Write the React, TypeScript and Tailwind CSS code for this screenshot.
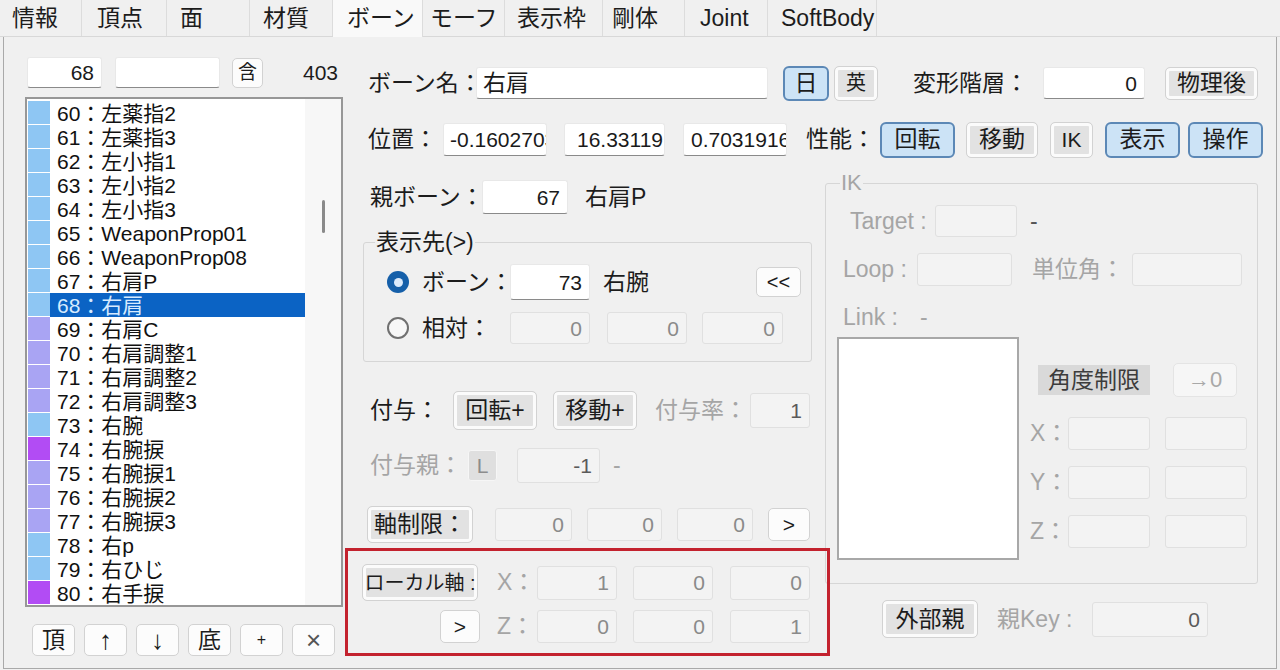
import React from "react";

const font = "font-['Liberation_Sans','Noto_Sans_CJK_JP',sans-serif]";

function Lbl({ className = "", children, off = false }: { className?: string; children: React.ReactNode; off?: boolean }) {
  return (
    <span className={`shrink-0 whitespace-nowrap text-[23px] leading-none ${off ? "text-[#a5a5a5]" : "text-[#1c1c1c]"} ${className}`}>
      {children}
    </span>
  );
}

function Field({
  className = "",
  value = "",
  off = false,
  ink = false,
  a = "justify-end pr-[7px]",
  size = "text-[21px]",
}: {
  className?: string;
  value?: string;
  off?: boolean;
  ink?: boolean;
  a?: string;
  size?: string;
}) {
  const look = off
    ? `border border-[#e0e0e0] bg-[#f3f3f3] ${ink ? "text-[#5a5a5a]" : "text-[#8a8a8a]"}`
    : "border border-[#e8e8e8] border-b-[#8a8a8a] bg-white text-[#1a1a1a]";
  return (
    <div className={`flex shrink-0 items-center overflow-hidden whitespace-nowrap rounded-[3px] leading-none ${look} ${a} ${size} ${className}`}>
      {value}
    </div>
  );
}

type Kind = "plain" | "gray" | "on" | "dim" | "faint" | "lbtn";
const kinds: Record<Kind, string> = {
  plain: "border border-[#d2d2d2] bg-[#fcfcfc] text-[#1c1c1c] rounded-[5px]",
  gray: "border border-[#d2d2d2] bg-[#e2e2e2] text-[#1c1c1c] rounded-[5px] shadow-[inset_0_0_0_3px_#fbfbfb]",
  on: "border-2 border-[#5c88b6] bg-[#cce3f6] text-[#1c1c1c] rounded-[6px]",
  dim: "bg-[#d9d9d9] text-[#3c3c3c]",
  faint: "border border-[#e4e4e4] bg-[#f6f6f6] text-[#a8a8a8] rounded-[5px]",
  lbtn: "border border-[#f6f6f6] bg-[#dfdfdf] text-[#8c8c8c] rounded-[3px]",
};

function Btn({
  kind = "plain",
  className = "",
  size = "text-[23px]",
  children,
}: {
  kind?: Kind;
  className?: string;
  size?: string;
  children: React.ReactNode;
}) {
  return (
    <div className={`flex shrink-0 items-center justify-center whitespace-nowrap leading-none ${kinds[kind]} ${size} ${className}`}>
      {children}
    </div>
  );
}

function Radio({ on = false, className = "" }: { on?: boolean; className?: string }) {
  return on ? (
    <div className={`flex h-[22px] w-[22px] shrink-0 items-center justify-center rounded-full bg-[#155fa9] ${className}`}>
      <div className="h-[9px] w-[9px] rounded-full bg-[#dbeafb]" />
    </div>
  ) : (
    <div className={`h-[22px] w-[22px] shrink-0 rounded-full border-2 border-[#707070] bg-[#f7f7f7] ${className}`} />
  );
}

const tabs = [
  { t: "情報", c: "w-[82px] pl-[12px]" },
  { t: "頂点", c: "w-[85px] pl-[15px]" },
  { t: "面", c: "w-[83px] pl-[13px]" },
  { t: "材質", c: "w-[83px] pl-[13px]" },
  { t: "ボーン", c: "w-[90px] pl-[14px]", on: true },
  { t: "モーフ", c: "w-[82px] pl-[7px]" },
  { t: "表示枠", c: "w-[98px] pl-[12px]" },
  { t: "剛体", c: "w-[82px] pl-[9px]" },
  { t: "Joint", c: "w-[83px] pl-[15px]" },
  { t: "SoftBody", c: "w-[109px] pl-[13px]" },
];

const BLUE = "bg-[#8ec6f3]";
const LAV = "bg-[#a9a4f3]";
const PUR = "bg-[#b24cf4]";
const bones: [number, string, string][] = [
  [60, "左薬指2", BLUE],
  [61, "左薬指3", BLUE],
  [62, "左小指1", BLUE],
  [63, "左小指2", BLUE],
  [64, "左小指3", BLUE],
  [65, "WeaponProp01", BLUE],
  [66, "WeaponProp08", BLUE],
  [67, "右肩P", BLUE],
  [68, "右肩", BLUE],
  [69, "右肩C", LAV],
  [70, "右肩調整1", LAV],
  [71, "右肩調整2", LAV],
  [72, "右肩調整3", LAV],
  [73, "右腕", BLUE],
  [74, "右腕捩", PUR],
  [75, "右腕捩1", LAV],
  [76, "右腕捩2", LAV],
  [77, "右腕捩3", LAV],
  [78, "右p", BLUE],
  [79, "右ひじ", BLUE],
  [80, "右手捩", PUR],
];

function BoneList() {
  return (
    <div className="flex w-[339px] shrink-0 flex-col pl-[21px]">
      <div className="mt-[20px] flex h-[31px] items-center">
        <Field className="ml-[2px] h-[31px] w-[75px]" value="68" />
        <Field className="ml-[13px] h-[31px] w-[105px]" />
        <Btn className="ml-[12px] h-[30px] w-[31px]" size="text-[19px]">含</Btn>
        <span className="flex-1 pr-[5px] text-right text-[21px] leading-none text-[#1c1c1c]">403</span>
      </div>
      <div className="mt-[9px] flex h-[510px] w-[318px] border-2 border-[#979797] bg-white">
        <div className="flex w-[278px] flex-col pt-[2px]">
          {bones.map(([n, name, c]) => (
            <div key={n} className="flex h-[24px] shrink-0">
              <div className={`ml-[1px] h-[23px] w-[22px] ${c}`} />
              <div
                className={`flex w-[255px] items-center whitespace-nowrap pl-[7px] text-[21px] leading-none ${
                  n === 68 ? "bg-[#0b63c4] text-[#d6ebff]" : "text-[#111111]"
                }`}
              >
                {n}：{name}
              </div>
            </div>
          ))}
        </div>
        <div className="flex w-[36px] justify-center bg-[#f7f7f7] pt-[101px]">
          <div className="h-[33px] w-[3px] rounded-full bg-[#8a8a8a]" />
        </div>
      </div>
      <div className="ml-[7px] mt-[17px] flex gap-[9px]">
        <Btn className="h-[32px] w-[43px]">頂</Btn>
        <Btn className="h-[32px] w-[43px]" size="text-[26px]">↑</Btn>
        <Btn className="h-[32px] w-[43px]" size="text-[26px]">↓</Btn>
        <Btn className="h-[32px] w-[43px]">底</Btn>
        <Btn className="h-[32px] w-[43px]" size="text-[16px]">+</Btn>
        <Btn className="h-[32px] w-[43px] text-[#555555]" size="text-[26px]">×</Btn>
      </div>
    </div>
  );
}

function BoneDetail() {
  return (
    <div className="flex w-[482px] shrink-0 flex-col">
      <div className="mt-[22px] flex h-[34px] items-center pl-[27px]">
        <Lbl className="w-[112px]">親ボーン：</Lbl>
        <Field className="h-[34px] w-[86px]" value="67" />
        <Lbl className="ml-[17px]">右肩P</Lbl>
      </div>

      <fieldset className="ml-[20px] mt-[17px] w-[449px] rounded-[3px] border border-[#d6d6d6] pb-[17px]">
        <legend className="ml-[11px] px-[1px] text-[23px] leading-[22px] text-[#1c1c1c]">表示先(&gt;)</legend>
        <div className="mt-[11px] flex h-[36px] items-center">
          <Radio on className="ml-[23px]" />
          <Lbl className="ml-[13px] w-[88px]">ボーン：</Lbl>
          <Field className="h-[36px] w-[80px]" value="73" />
          <Lbl className="ml-[13px]">右腕</Lbl>
          <Btn className="ml-auto mr-[10px] h-[30px] w-[45px]" size="text-[20px]">&lt;&lt;</Btn>
        </div>
        <div className="mt-[12px] flex h-[32px] items-center">
          <Radio className="ml-[23px]" />
          <Lbl className="ml-[13px] w-[88px]">相対：</Lbl>
          <Field off className="h-[32px] w-[80px]" value="0" />
          <Field off className="ml-[17px] h-[32px] w-[80px]" value="0" />
          <Field off className="ml-[15px] h-[32px] w-[81px]" value="0" />
        </div>
      </fieldset>

      <div className="mt-[29px] flex h-[39px] items-center pl-[27px]">
        <Lbl className="w-[83px]">付与：</Lbl>
        <Btn kind="gray" className="h-[39px] w-[84px]">回転+</Btn>
        <Btn kind="gray" className="ml-[16px] h-[39px] w-[84px]">移動+</Btn>
        <Lbl off className="ml-[18px] w-[95px]">付与率：</Lbl>
        <Field off ink className="h-[35px] w-[60px]" value="1" />
      </div>

      <div className="mt-[18px] flex h-[35px] items-center pl-[27px]">
        <Lbl off className="w-[98px]">付与親：</Lbl>
        <Btn kind="lbtn" className="h-[31px] w-[29px]" size="text-[21px]">L</Btn>
        <Field off ink className="ml-[20px] h-[35px] w-[83px]" value="-1" />
        <Lbl off className="ml-[13px] text-[#8a8a8a]">-</Lbl>
      </div>

      <div className="mt-[23px] flex h-[37px] items-center">
        <Btn kind="gray" className="ml-[24px] h-[37px] w-[106px]">軸制限：</Btn>
        <Field off className="ml-[22px] h-[33px] w-[77px]" value="0" />
        <Field off className="ml-[15px] h-[33px] w-[75px]" value="0" />
        <Field off className="ml-[15px] h-[33px] w-[76px]" value="0" />
        <Btn className="ml-[15px] h-[33px] w-[42px]" size="text-[21px]">&gt;</Btn>
      </div>

      <div className="relative z-10 ml-[2px] mt-[5px] h-[108px] w-[485px] shrink-0 border-[3px] border-[#c3222e]">
        <div className="mt-[13px] flex h-[37px] items-center">
          <Btn kind="gray" className="ml-[14px] h-[37px] w-[116px]" size="text-[20px]">ローカル軸 :</Btn>
          <Lbl off className="ml-[19px] w-[40px]">X：</Lbl>
          <Field off className="h-[34px] w-[80px]" value="1" />
          <Field off className="ml-[16px] h-[34px] w-[80px]" value="0" />
          <Field off className="ml-[17px] h-[34px] w-[80px]" value="0" />
        </div>
        <div className="mt-[9px] flex h-[33px] items-center">
          <Btn className="ml-[92px] h-[33px] w-[40px]" size="text-[21px]">&gt;</Btn>
          <Lbl off className="ml-[17px] w-[40px]">Z：</Lbl>
          <Field off className="h-[33px] w-[80px]" value="0" />
          <Field off className="ml-[16px] h-[33px] w-[80px]" value="0" />
          <Field off className="ml-[17px] h-[33px] w-[80px]" value="1" />
        </div>
      </div>
    </div>
  );
}

function IkPanel() {
  return (
    <div className="flex flex-1 flex-col">
      <fieldset className="mt-[14px] h-[412px] w-[433px] rounded-[3px] border border-[#d6d6d6]">
        <legend className="ml-[14px] px-[1px] text-[22px] leading-[22px] text-[#a5a5a5]">IK</legend>
        <div className="mt-[11px] flex h-[32px] items-center">
          <Lbl off className="ml-[24px] w-[85px]">Target :</Lbl>
          <Field off className="h-[32px] w-[82px]" />
          <Lbl className="ml-[13px] text-[#555555]">-</Lbl>
        </div>
        <div className="mt-[16px] flex h-[33px] items-center">
          <Lbl off className="ml-[17px] w-[74px]">Loop :</Lbl>
          <Field off className="h-[33px] w-[95px]" />
          <Lbl off className="ml-[20px] w-[100px]">単位角：</Lbl>
          <Field off className="h-[33px] w-[110px]" />
        </div>
        <div className="mt-[19px] flex h-[24px] items-center">
          <Lbl off className="ml-[17px] w-[77px]">Link :</Lbl>
          <Lbl off>-</Lbl>
        </div>
        <div className="mt-[8px] flex">
          <div className="ml-[11px] h-[223px] w-[182px] shrink-0 border-2 border-[#a8a8a8] bg-white" />
          <div className="flex flex-col">
            <div className="mt-[26px] flex h-[34px] items-center">
              <Btn kind="dim" className="ml-[19px] h-[30px] w-[112px]">角度制限</Btn>
              <Btn kind="faint" className="ml-[23px] h-[34px] w-[64px]" size="text-[22px]">→0</Btn>
            </div>
            {["X：", "Y：", "Z："].map((axis, i) => (
              <div key={axis} className={`flex h-[33px] items-center ${i === 0 ? "mt-[20px]" : "mt-[16px]"}`}>
                <Lbl off className="ml-[11px] w-[38px]">{axis}</Lbl>
                <Field off className="h-[33px] w-[82px]" />
                <Field off className="ml-[15px] h-[33px] w-[82px]" />
              </div>
            ))}
          </div>
        </div>
      </fieldset>
      <div className="mt-[16px] flex h-[38px] items-center">
        <Btn kind="gray" className="ml-[57px] h-[38px] w-[96px]">外部親</Btn>
        <Lbl off className="ml-[19px] w-[95px]">親Key :</Lbl>
        <Field off ink className="h-[35px] w-[116px]" value="0" />
      </div>
    </div>
  );
}

export default function App() {
  return (
    <div className={`h-[670px] w-[1280px] overflow-hidden bg-[#f0f0f0] text-[#1c1c1c] ${font}`}>
      <div className="flex h-[37px] border-b border-[#d8d8d8]">
        {tabs.map((tab) => (
          <div
            key={tab.t}
            className={`flex shrink-0 items-center border-r border-[#dcdcdc] text-[23px] leading-none text-[#1c1c1c] ${tab.c} ${
              tab.on ? "h-[37px] bg-[#f9f9f9]" : "h-[36px]"
            }`}
          >
            {tab.t}
          </div>
        ))}
      </div>

      <div className="mx-[3px] flex h-[632px] border-x border-b border-[#a9a9a9]">
        <BoneList />
        <div className="flex flex-1 flex-col">
          <div className="mt-[28px] flex h-[36px] items-center">
            <Lbl className="ml-[25px] w-[108px]">ボーン名：</Lbl>
            <Field className="h-[32px] w-[292px]" a="justify-start pl-[6px]" size="text-[23px]" value="右肩" />
            <Btn kind="on" className="ml-[15px] h-[35px] w-[46px]">日</Btn>
            <Btn kind="gray" className="ml-[5px] h-[35px] w-[44px]" size="text-[20px]">英</Btn>
            <Lbl className="ml-[35px] w-[130px]">変形階層：</Lbl>
            <Field className="h-[32px] w-[102px]" value="0" />
            <Btn kind="gray" className="ml-[20px] h-[33px] w-[93px]">物理後</Btn>
          </div>

          <div className="mt-[20px] flex h-[37px] items-center">
            <Lbl className="ml-[25px] w-[75px]">位置：</Lbl>
            <Field className="h-[33px] w-[104px]" a="justify-start pl-[6px]" value="-0.1602703" />
            <Field className="ml-[17px] h-[33px] w-[101px]" a="justify-start pl-[12px]" value="16.33119" />
            <Field className="ml-[18px] h-[33px] w-[104px]" a="justify-start pl-[7px]" value="0.70319164" />
            <Lbl className="ml-[19px] w-[74px]">性能：</Lbl>
            <Btn kind="on" className="h-[36px] w-[75px]">回転</Btn>
            <Btn kind="gray" className="ml-[11px] h-[36px] w-[72px]">移動</Btn>
            <Btn kind="gray" className="ml-[12px] h-[36px] w-[43px]" size="text-[21px]">IK</Btn>
            <Btn kind="on" className="ml-[12px] h-[36px] w-[75px]">表示</Btn>
            <Btn kind="on" className="ml-[8px] h-[36px] w-[75px]">操作</Btn>
          </div>

          <div className="flex">
            <BoneDetail />
            <IkPanel />
          </div>
        </div>
      </div>
    </div>
  );
}
